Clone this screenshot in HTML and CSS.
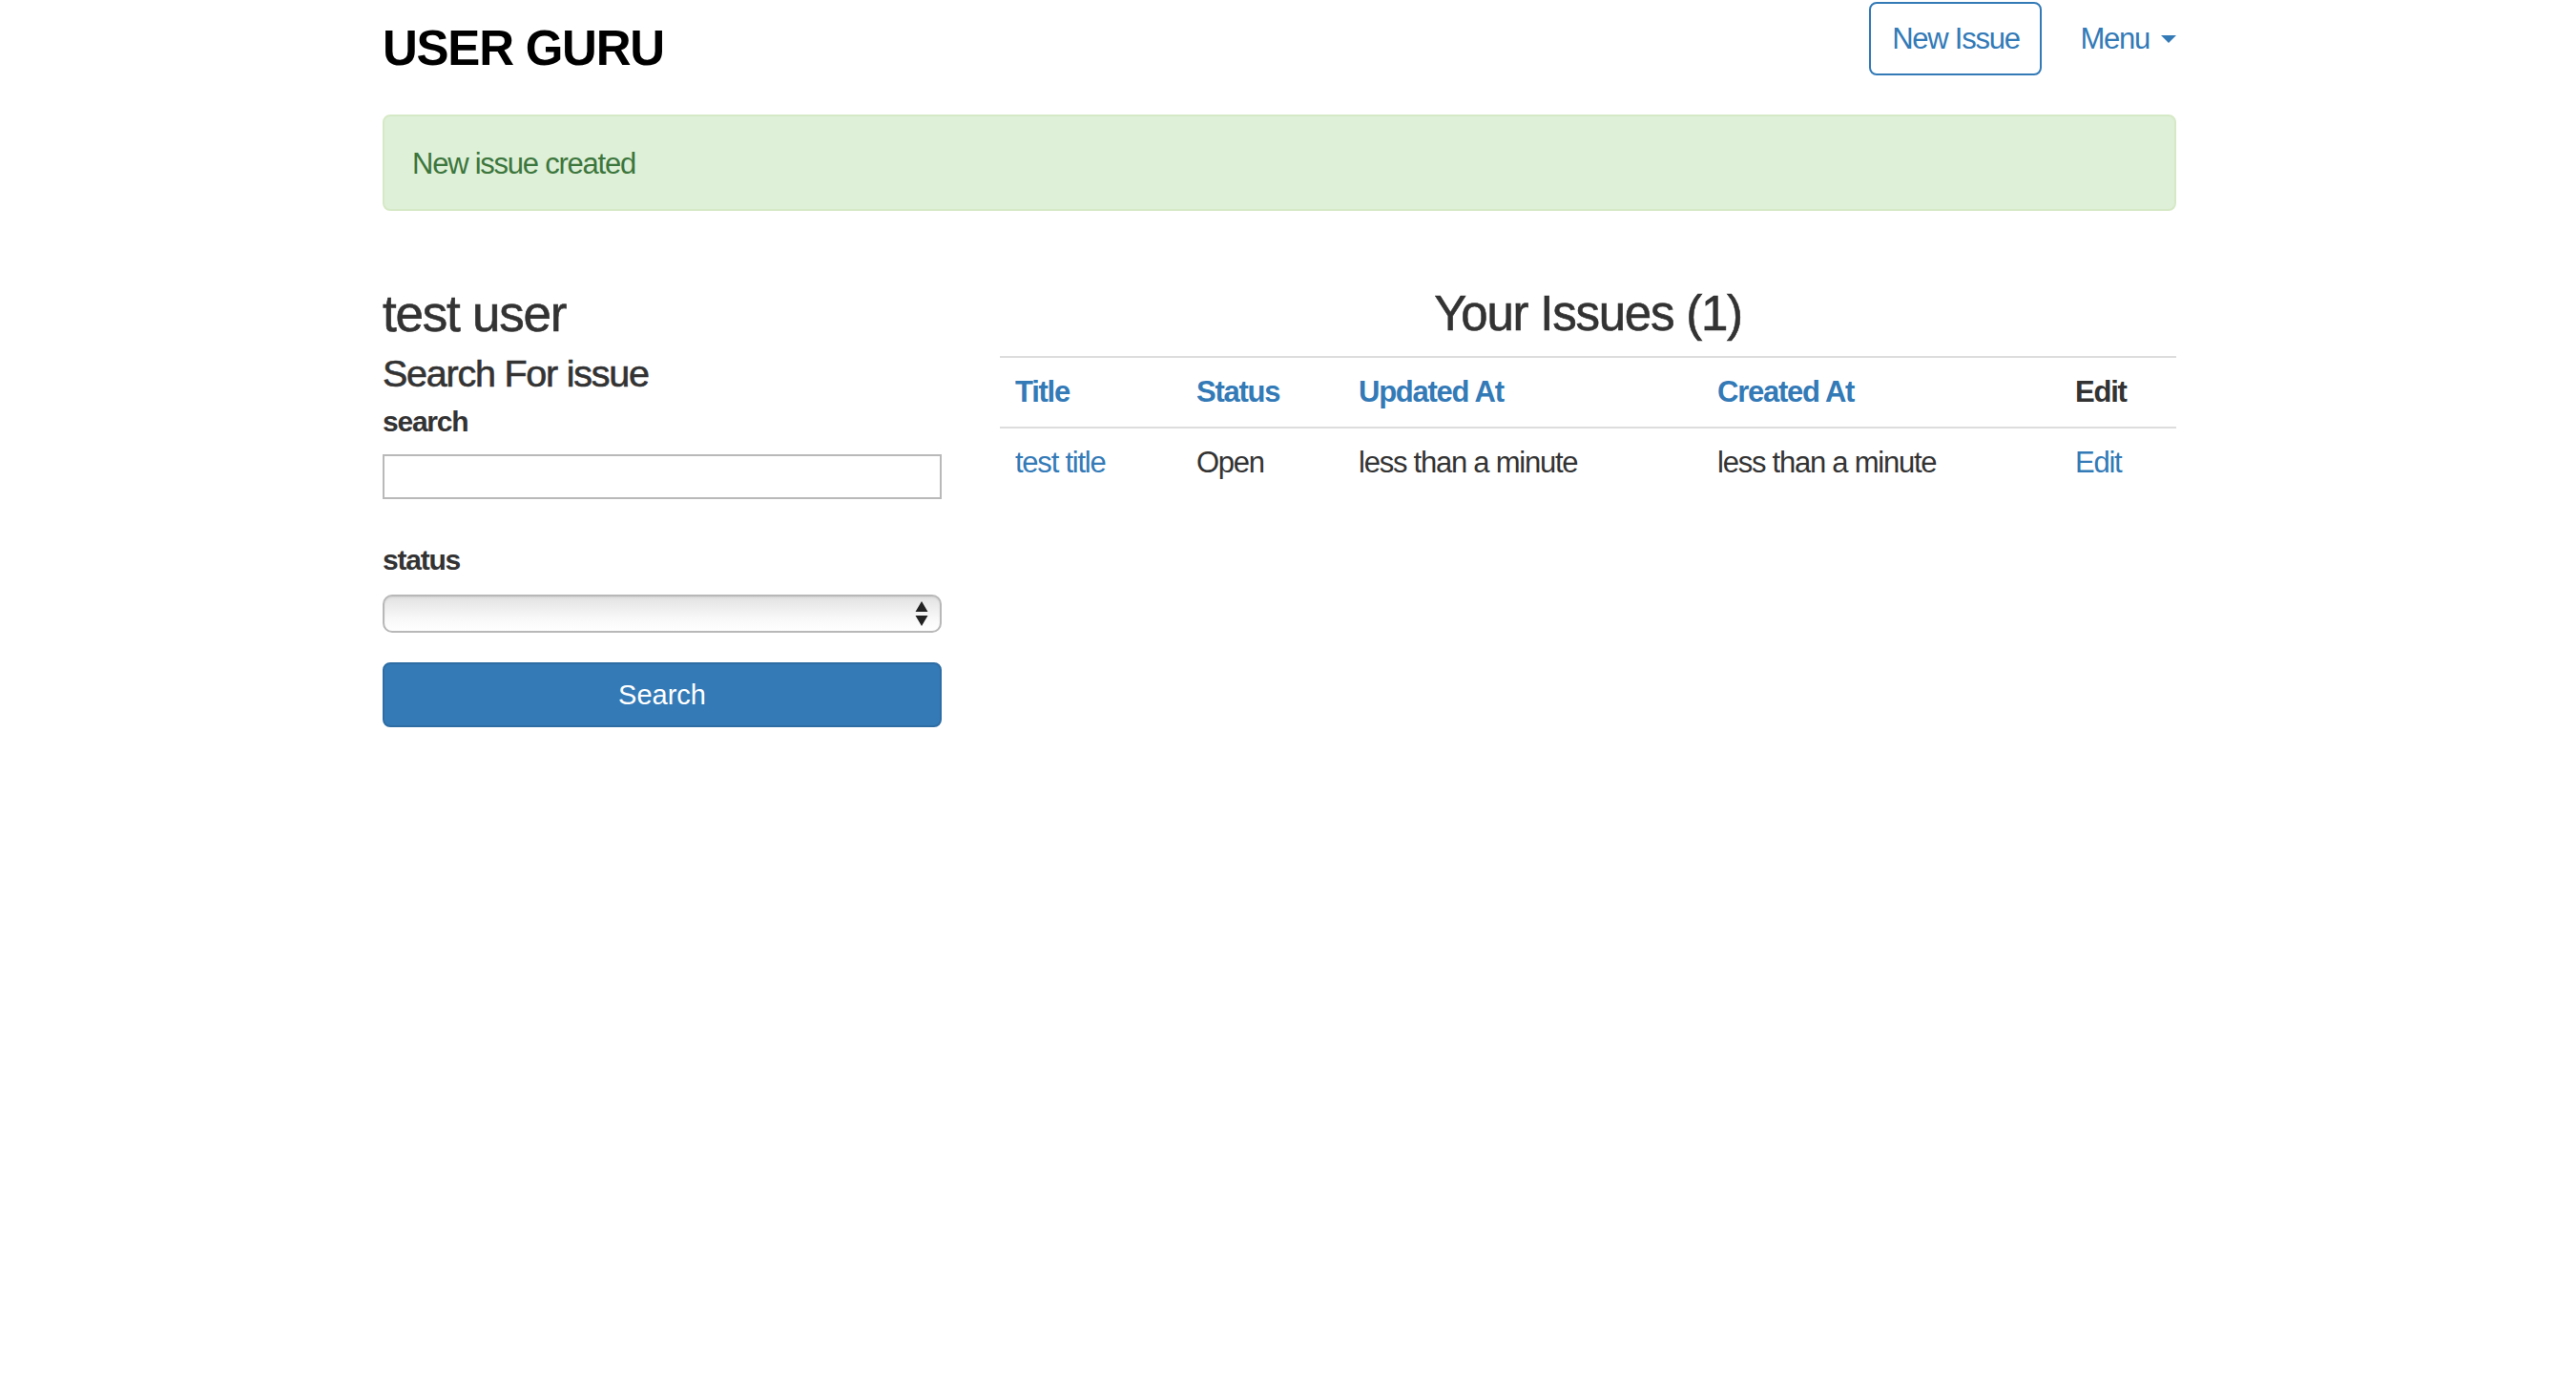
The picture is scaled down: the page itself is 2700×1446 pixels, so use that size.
FILE: index.html
```html
<!DOCTYPE html>
<html lang="en">
<head>
<meta charset="utf-8">
<title>User Guru</title>
<link rel="stylesheet" href="styles.css">
</head>
<body>
<div class="container">
  <header class="topbar">
    <h1 class="brand">USER GURU</h1>
    <nav class="nav">
      <a class="btn-outline" href="#">New Issue</a>
      <a class="menu" href="#">Menu<span class="caret"></span></a>
    </nav>
  </header>

  <div class="alert">New issue created</div>

  <div class="row">
    <aside class="col-left">
      <h3 class="user-name">test user</h3>
      <h4 class="search-title">Search For issue</h4>
      <form class="search-form">
        <label class="field-label" for="q">search</label>
        <input class="text-input" id="q" type="text">
        <label class="field-label status-label" for="s">status</label>
        <div class="select-wrap">
          <select class="select" id="s"><option></option></select>
          <svg class="select-arrows" width="14" height="26" viewBox="0 0 14 26"><path d="M7 0 L13.5 11 L0.5 11 Z M0.5 15 L13.5 15 L7 26 Z" fill="#222"/></svg>
        </div>
        <button class="btn-primary" type="button">Search</button>
      </form>
    </aside>

    <section class="col-right">
      <h3 class="issues-title">Your Issues (1)</h3>
      <table class="issues">
        <colgroup>
          <col class="c-title"><col class="c-status"><col class="c-updated"><col class="c-created"><col class="c-edit">
        </colgroup>
        <thead>
          <tr>
            <th><a href="#">Title</a></th>
            <th><a href="#">Status</a></th>
            <th><a href="#">Updated At</a></th>
            <th><a href="#">Created At</a></th>
            <th>Edit</th>
          </tr>
        </thead>
        <tbody>
          <tr>
            <td><a href="#">test title</a></td>
            <td>Open</td>
            <td>less than a minute</td>
            <td>less than a minute</td>
            <td><a href="#">Edit</a></td>
          </tr>
        </tbody>
      </table>
    </section>
  </div>
</div>
</body>
</html>
```

FILE: styles.css
```css
* { box-sizing: border-box; }

html, body {
  margin: 0;
  padding: 0;
  background: #fff;
}

body {
  font-family: "Liberation Sans", Arial, "Helvetica Neue", Helvetica, sans-serif;
  font-size: 31px;
  letter-spacing: -0.04em;
  color: #333;
}

a { color: #337ab7; text-decoration: none; }

.container {
  width: 1880px;
  margin-left: 401px;
}

/* header */
.topbar {
  display: flex;
  justify-content: space-between;
  align-items: flex-start;
  height: 120px;
}

.brand {
  margin: 0;
  font-size: 51px;
  line-height: 102px;
  font-weight: 700;
  color: #000;
}

.nav {
  display: flex;
  align-items: center;
  margin-top: 2px;
  height: 77px;
}

.btn-outline {
  display: flex;
  align-items: center;
  justify-content: center;
  width: 181px;
  height: 77px;
  border: 2px solid #337ab7;
  border-radius: 8px;
  font-size: 31px;
  color: #337ab7;
}

.menu {
  display: flex;
  align-items: center;
  margin-left: 40px;
  font-size: 31px;
  color: #337ab7;
}

.caret {
  display: inline-block;
  width: 0;
  height: 0;
  margin-left: 12px;
  border-top: 8px solid #337ab7;
  border-left: 8px solid transparent;
  border-right: 8px solid transparent;
}

/* alert */
.alert {
  display: flex;
  align-items: center;
  height: 101px;
  padding-left: 29px;
  padding-top: 3px;
  background: #dff0d8;
  border: 2px solid #d6e9c6;
  border-radius: 8px;
  color: #3c763d;
  font-size: 31px;
}

/* layout */
.row {
  display: flex;
  gap: 61px;
  margin-top: 73px;
}

.col-left {
  width: 586px;
  flex: none;
}

.col-right {
  flex: 1;
}

.user-name,
.issues-title,
.search-title {
  -webkit-text-stroke: 0.6px #333;
}

.user-name {
  margin: 0;
  font-size: 53px;
  line-height: 70px;
  font-weight: 400;
  color: #333;
}

.search-title {
  margin: 1px 0 0;
  font-size: 39.5px;
  line-height: 52px;
  font-weight: 400;
  color: #333;
}

.search-form {
  display: flex;
  flex-direction: column;
}

.field-label {
  display: block;
  margin-top: 5px;
  font-size: 30px;
  line-height: 40px;
  font-weight: 700;
  color: #333;
}

.status-label { margin-top: 44px; }

.text-input {
  margin: 14px 0 0;
  width: 100%;
  height: 47px;
  border: 2px solid #b9b9b9;
  border-radius: 0;
  background: #fff;
  font: inherit;
}

.select-wrap {
  position: relative;
  margin-top: 16px;
  height: 40px;
}

.select {
  -webkit-appearance: none;
  appearance: none;
  width: 100%;
  height: 40px;
  margin: 0;
  border: 2px solid #b8b8b8;
  border-radius: 10px;
  background: linear-gradient(#e2e2e2, #f7f7f7 60%, #ffffff);
  box-shadow: inset 0 1px 2px rgba(0,0,0,0.08);
  font: inherit;
}

.select-arrows {
  position: absolute;
  right: 14px;
  top: 7px;
}

.btn-primary {
  margin-top: 31px;
  width: 100%;
  height: 68px;
  border: 2px solid #2e6da4;
  border-radius: 8px;
  background: #337ab7;
  color: #fff;
  font: inherit;
  font-size: 29px;
}

/* right column */
.issues-title {
  margin: 0;
  text-align: center;
  font-size: 51px;
  line-height: 70px;
  font-weight: 400;
  color: #333;
}

.issues {
  width: 100%;
  margin-top: 9px;
  border-collapse: collapse;
  table-layout: fixed;
}

.c-title { width: 190px; }
.c-status { width: 170px; }
.c-updated { width: 376px; }
.c-created { width: 375px; }
.c-edit { width: 122px; }

.issues th,
.issues td {
  text-align: left;
  padding: 0 0 0 16px;
  vertical-align: middle;
  border-top: 2px solid #ddd;
}

.issues th {
  height: 74px;
  font-size: 31px;
  font-weight: 700;
  color: #333;
  border-bottom: 2px solid #ddd;
}

.issues td {
  height: 70px;
  padding-top: 2px;
  font-size: 31px;
  border-top: 0;
}
```
